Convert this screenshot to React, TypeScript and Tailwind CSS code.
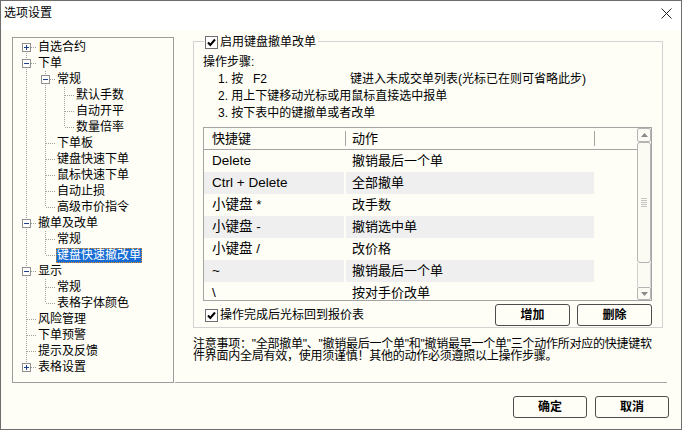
import React from "react";

type Node = {
  label: string;
  level: number;
  anc: boolean[];
  next: boolean;
  box?: "+" | "-";
  first?: boolean;
  sel?: boolean;
};

const tree: Node[] = [
  { label: "自选合约", level: 0, anc: [], next: true, box: "+", first: true },
  { label: "下单", level: 0, anc: [], next: true, box: "-" },
  { label: "常规", level: 1, anc: [true], next: true, box: "-" },
  { label: "默认手数", level: 2, anc: [true, true], next: true },
  { label: "自动开平", level: 2, anc: [true, true], next: true },
  { label: "数量倍率", level: 2, anc: [true, true], next: false },
  { label: "下单板", level: 1, anc: [true], next: true },
  { label: "键盘快速下单", level: 1, anc: [true], next: true },
  { label: "鼠标快速下单", level: 1, anc: [true], next: true },
  { label: "自动止损", level: 1, anc: [true], next: true },
  { label: "高级市价指令", level: 1, anc: [true], next: false },
  { label: "撤单及改单", level: 0, anc: [], next: true, box: "-" },
  { label: "常规", level: 1, anc: [true], next: true },
  { label: "键盘快速撤改单", level: 1, anc: [true], next: false, sel: true },
  { label: "显示", level: 0, anc: [], next: true, box: "-" },
  { label: "常规", level: 1, anc: [true], next: true },
  { label: "表格字体颜色", level: 1, anc: [true], next: false },
  { label: "风险管理", level: 0, anc: [], next: true },
  { label: "下单预警", level: 0, anc: [], next: true },
  { label: "提示及反馈", level: 0, anc: [], next: true },
  { label: "表格设置", level: 0, anc: [], next: false, box: "+" },
];

const DOT = "#a0a0a0";

function Cell({ top, bottom, h, box }: { top: boolean; bottom: boolean; h: boolean; box?: "+" | "-" }) {
  return (
    <svg width="19" height="16" className="shrink-0 block" shapeRendering="crispEdges">
      {top && <line x1="8.5" y1="0" x2="8.5" y2="8" stroke={DOT} strokeDasharray="1 1" />}
      {bottom && <line x1="8.5" y1="8" x2="8.5" y2="16" stroke={DOT} strokeDasharray="1 1" />}
      {h && <line x1="9" y1="8.5" x2="19" y2="8.5" stroke={DOT} strokeDasharray="1 1" />}
      {box && (
        <g>
          <rect x="4.5" y="4.5" width="8" height="8" fill="#ffffff" stroke="#8f8f8f" />
          <line x1="6" y1="8.5" x2="11" y2="8.5" stroke="#1d3f8f" />
          {box === "+" && <line x1="8.5" y1="6" x2="8.5" y2="11" stroke="#1d3f8f" />}
        </g>
      )}
    </svg>
  );
}

function Checkbox() {
  return (
    <svg width="13" height="13" className="shrink-0 block" shapeRendering="crispEdges">
      <rect x="0.5" y="0.5" width="12" height="12" fill="#ffffff" stroke="#6f6f6f" />
      <path d="M3 6.5 L5.3 9 L10 3.5" fill="none" stroke="#000" strokeWidth="2" shapeRendering="auto" />
    </svg>
  );
}

const rows: [string, string][] = [
  ["Delete", "撤销最后一个单"],
  ["Ctrl + Delete", "全部撤单"],
  ["小键盘 *", "改手数"],
  ["小键盘 -", "撤销选中单"],
  ["小键盘 /", "改价格"],
  ["~", "撤销最后一个单"],
  ["\\", "按对手价改单"],
];

function Btn({ children, w }: { children: React.ReactNode; w: string }) {
  return (
    <div
      className={`${w} h-[22px] border border-[#4d4d4d] rounded-[3px] bg-[#fefef6] flex items-center justify-center text-[12px] font-bold leading-none`}
    >
      {children}
    </div>
  );
}

function Scrollbar() {
  return (
    <div className="w-[14px] h-full flex flex-col bg-[#fbfbf3]">
      <div className="h-[14px] border border-[#b4b4b4] rounded-[2px] flex items-center justify-center">
        <svg width="7" height="4">
          <path d="M0 4 L3.5 0 L7 4 Z" fill="#8a8a8a" />
        </svg>
      </div>
      <div className="h-[121px] border border-[#b4b4b4] rounded-[3px] flex items-center justify-center">
        <div className="flex flex-col gap-[1px]">
          <div className="w-[6px] h-px bg-[#c4c4c4]" />
          <div className="w-[6px] h-px bg-[#c4c4c4]" />
          <div className="w-[6px] h-px bg-[#c4c4c4]" />
          <div className="w-[6px] h-px bg-[#c4c4c4]" />
          <div className="w-[6px] h-px bg-[#c4c4c4]" />
        </div>
      </div>
      <div className="flex-1 border-x border-[#d0d0d0]" />
      <div className="h-[13px] border border-[#b4b4b4] rounded-[2px] flex items-center justify-center">
        <svg width="7" height="4">
          <path d="M0 0 L3.5 4 L7 0 Z" fill="#8a8a8a" />
        </svg>
      </div>
    </div>
  );
}

export default function App() {
  return (
    <div className="w-[682px] h-[430px] bg-[#fefef6] border border-[#6e6e6e] flex flex-col overflow-hidden text-black font-['Liberation_Sans','Noto_Sans_CJK_SC',sans-serif]">
      {/* title bar */}
      <div className="h-[29px] bg-white flex items-start justify-between pl-[3px] pr-[9px] shrink-0">
        <div className="pt-[4px] text-[12px] leading-[16px]">选项设置</div>
        <svg width="11" height="11" className="mt-[7px]">
          <line x1="0.5" y1="0.5" x2="10.5" y2="10.5" stroke="#222" />
          <line x1="10.5" y1="0.5" x2="0.5" y2="10.5" stroke="#222" />
        </svg>
      </div>

      {/* body */}
      <div className="flex items-start">
        {/* tree */}
        <div className="ml-[11px] mt-[7px] w-[162px] h-[346px] border border-[#9c9c9c] pl-[5px] pt-[1px] flex flex-col shrink-0">
          {tree.map((n, i) => (
            <div key={i} className="flex items-center h-[16px]">
              {n.anc.map((c, j) => (
                <Cell key={j} top={c} bottom={c} h={false} />
              ))}
              <Cell top={!n.first} bottom={n.next} h={true} box={n.box} />
              <div
                className={
                  n.sel
                    ? "h-[15px] px-[1px] text-[12px] leading-[15px] whitespace-nowrap bg-[#166cd3] text-white outline outline-1 outline-dotted outline-[#e8891c] -outline-offset-1"
                    : "h-[15px] px-[1px] text-[12px] leading-[15px] whitespace-nowrap"
                }
              >
                {n.label}
              </div>
            </div>
          ))}
        </div>

        {/* right column */}
        <div className="ml-[1px] mt-[6px] w-[492px] h-[347px] flex flex-col border-b border-[#a8a8a8] shrink-0">
          {/* group box */}
          <div className="ml-[18px] w-[470px] flex flex-col">
            <div className="flex h-[13px]">
              <div className="w-[11px] mt-[5px] h-[8px] border-t border-l border-[#d2d2d2]" />
              <div className="flex items-center pl-[1px] pr-[2px]">
                <Checkbox />
                <span className="ml-[2px] text-[12px] leading-[13px] whitespace-nowrap">启用键盘撤单改单</span>
              </div>
              <div className="flex-1 mt-[5px] h-[8px] border-t border-r border-[#d2d2d2]" />
            </div>
            <div className="border-x border-b border-[#d2d2d2] pl-[9px] pr-[10px] pt-[5px] pb-[1px] flex flex-col">
              <div className="text-[12px] leading-[17px]">操作步骤:</div>
              <div className="pl-[15px] text-[12px] leading-[17px] flex flex-col">
                <div className="flex whitespace-nowrap">
                  <span className="w-[35px]">1. 按</span>
                  <span className="w-[97px]">F2</span>
                  <span>键进入未成交单列表(光标已在则可省略此步)</span>
                </div>
                <div className="whitespace-nowrap">2. 用上下键移动光标或用鼠标直接选中报单</div>
                <div className="whitespace-nowrap">3. 按下表中的键撤单或者改单</div>
              </div>

              {/* table */}
              <div className="mt-[5px] w-[449px] h-[174px] border border-[#a4a4a4] flex overflow-hidden">
                <div className="flex-1 flex flex-col overflow-hidden">
                  <div className="h-[22px] border-b border-[#a4a4a4] flex items-center shrink-0">
                    <div className="w-[141px] pl-[8px] text-[13px] leading-[21px]">快捷键</div>
                    <div className="w-px h-[15px] bg-[#a4a4a4]" />
                    <div className="w-[248px] pl-[6px] text-[13px] leading-[21px]">动作</div>
                    <div className="w-px h-[15px] bg-[#a4a4a4]" />
                  </div>
                  {rows.map(([k, a], i) => (
                    <div key={i} className="h-[22px] flex shrink-0">
                      <div
                        className={`w-[140px] pl-[8px] text-[13.5px] leading-[22px] whitespace-nowrap ${
                          i % 2 === 1 ? "bg-[#efefef]" : ""
                        }`}
                      >
                        {k}
                      </div>
                      <div
                        className={`ml-[2px] w-[248px] pl-[6px] text-[13px] leading-[22px] whitespace-nowrap ${
                          i % 2 === 1 ? "bg-[#efefef]" : ""
                        }`}
                      >
                        {a}
                      </div>
                    </div>
                  ))}
                </div>
                <Scrollbar />
              </div>

              <div className="mt-[3px] h-[22px] flex items-center justify-between">
                <div className="flex items-center ml-[2px]">
                  <Checkbox />
                  <span className="ml-[2px] text-[12px] leading-[13px] whitespace-nowrap">操作完成后光标回到报价表</span>
                </div>
                <div className="flex gap-[7px]">
                  <Btn w="w-[75px]">增加</Btn>
                  <Btn w="w-[75px]">删除</Btn>
                </div>
              </div>
            </div>
          </div>

          {/* note */}
          <div className="ml-[18px] mt-[10px] text-[12px] leading-[12px] tracking-[-0.25px] whitespace-nowrap">
            <div className="h-[12px]">注意事项："全部撤单"、"撤销最后一个单"和"撤销最早一个单"三个动作所对应的快捷键软</div>
            <div className="h-[12px]">件界面内全局有效，使用须谨慎！其他的动作必须遵照以上操作步骤。</div>
          </div>
        </div>
      </div>

      {/* bottom buttons */}
      <div className="mt-[13px] flex justify-end gap-[8px] pr-[12px]">
        <Btn w="w-[74px]">确定</Btn>
        <Btn w="w-[74px]">取消</Btn>
      </div>
    </div>
  );
}
